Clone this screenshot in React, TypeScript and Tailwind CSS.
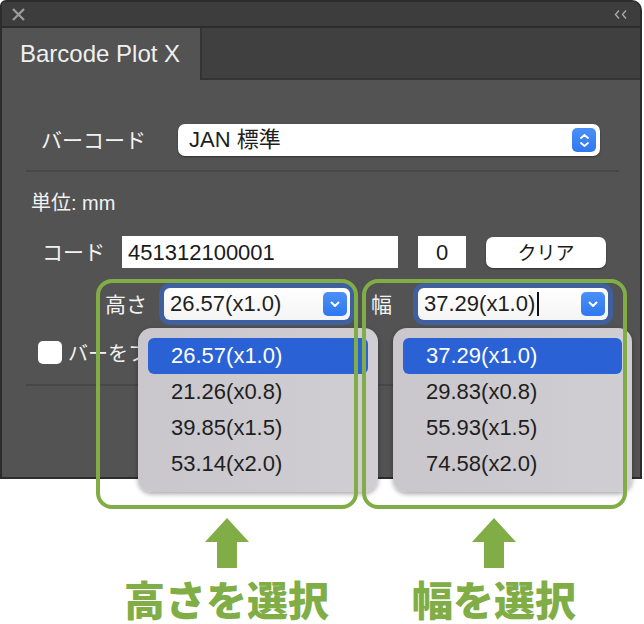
import React from "react";

const SANS = "font-['Liberation_Sans','Noto_Sans_CJK_JP',sans-serif]";
const CJK = "font-['Noto_Sans_CJK_JP',sans-serif]";

const heights = ["26.57(x1.0)", "21.26(x0.8)", "39.85(x1.5)", "53.14(x2.0)"];
const widths = ["37.29(x1.0)", "29.83(x0.8)", "55.93(x1.5)", "74.58(x2.0)"];

function ChevronButton() {
  return (
    <div className="flex h-[24px] w-[24px] items-center justify-center rounded-[5px] bg-gradient-to-b from-[#4a90f8] to-[#2f78ee]">
      <svg width="10" height="7" viewBox="0 0 10 7">
        <path d="M1.5 1.5 L5 5 L8.5 1.5" fill="none" stroke="white" strokeWidth="2" strokeLinecap="round" strokeLinejoin="round" />
      </svg>
    </div>
  );
}

function FocusedSelect({ value, width, caret }: { value: string; width: string; caret?: boolean }) {
  return (
    <div className={`${width} h-[42px] rounded-[11px] bg-[#3f5f9e] p-[5px]`}>
      <div className="flex h-full items-center justify-between rounded-[6px] bg-gradient-to-b from-white to-[#f4f4f4] pl-[6px] pr-[3px]">
        <span className="flex items-center text-[22px] leading-none text-[#1e1e1e]">
          {value}
          {caret && <span className="ml-[2px] inline-block h-[24px] w-[2px] bg-[#111]" />}
        </span>
        <ChevronButton />
      </div>
    </div>
  );
}

function Menu({ items, className }: { items: string[]; className: string }) {
  return (
    <div className={`absolute flex h-[164px] flex-col rounded-[14px] bg-gradient-to-r from-[#c9c7cc] to-[#d0ced3] p-[10px] shadow-[0_2px_5px_rgba(0,0,0,0.35)] ${className}`}>
      {items.map((item, i) => (
        <div
          key={item}
          className={`flex h-[36px] items-center rounded-[6px] pl-[23px] text-[22px] leading-none ${
            i === 0 ? "bg-[#2a62d6] text-white" : "text-[#1e1e1e]"
          }`}
        >
          {item}
        </div>
      ))}
    </div>
  );
}

function UpArrow() {
  return (
    <svg width="46" height="50" viewBox="0 0 46 50">
      <path d="M23 0 L45 24 L33 24 L33 50 L13 50 L13 24 L1 24 Z" fill="#80ad45" />
    </svg>
  );
}

export default function App() {
  return (
    <div className={`relative h-[624px] w-[644px] overflow-hidden bg-white ${SANS}`}>
      {/* panel */}
      <div className="flex h-[479px] w-[642px] flex-col overflow-hidden rounded-tl-[6px] rounded-tr-[10px] border-2 border-[#2c2c2c] bg-[#535353]">
        <div className="flex h-[24px] items-center justify-between bg-[#3d3d3d] pl-[10px] pr-[12px]">
          <svg width="13" height="13" viewBox="0 0 13 13">
            <path d="M1 1 L12 12 M12 1 L1 12" stroke="#9b9b9b" strokeWidth="2.3" />
          </svg>
          <svg width="14" height="9" viewBox="0 0 14 9">
            <path d="M5 0.5 L1.5 4.5 L5 8.5 M12 0.5 L8.5 4.5 L12 8.5" fill="none" stroke="#a8a8a8" strokeWidth="1.4" />
          </svg>
        </div>
        <div className="flex h-[54px] border-t-2 border-[#2c2c2c]">
          <div className="flex w-[198px] items-center bg-[#535353] pl-[18px] text-[24px] text-[#f0f0f0]">
            Barcode Plot X
          </div>
          <div className="flex-1 border-b-2 border-l-2 border-[#343434] bg-[#404040]" />
        </div>

        <div className="flex flex-col">
          <div className="mt-[44px] flex h-[32px] items-center">
            <span className={`ml-[39px] w-[137px] text-[21px] text-[#f2f2f2] ${CJK}`}>バーコード</span>
            <div className="flex h-[32px] w-[422px] items-center justify-between rounded-[7px] bg-white pl-[11px] pr-[4px] shadow-[0_1px_2px_rgba(0,0,0,0.4)]">
              <span className="text-[22px] leading-none text-[#1e1e1e]">JAN 標準</span>
              <div className="flex h-[24px] w-[24px] flex-col items-center justify-center gap-[3px] rounded-[5px] bg-gradient-to-b from-[#4a90f8] to-[#2f78ee]">
                <svg width="9" height="5" viewBox="0 0 9 5">
                  <path d="M1 4 L4.5 1 L8 4" fill="none" stroke="white" strokeWidth="1.8" strokeLinecap="round" />
                </svg>
                <svg width="9" height="5" viewBox="0 0 9 5">
                  <path d="M1 1 L4.5 4 L8 1" fill="none" stroke="white" strokeWidth="1.8" strokeLinecap="round" />
                </svg>
              </div>
            </div>
          </div>

          <div className="ml-[24px] mt-[14px] h-[2px] w-[593px] bg-[#474747]" />

          <div className="ml-[29px] mt-[19px] text-[20px] leading-[24px] text-[#f2f2f2]">単位: mm</div>

          <div className="mt-[21px] flex h-[32px] items-center">
            <span className={`ml-[40px] w-[80px] text-[21px] text-[#f2f2f2] ${CJK}`}>コード</span>
            <div className="flex h-[32px] w-[276px] items-center bg-white pl-[6px] text-[22px] text-[#1a1a1a]">
              451312100001
            </div>
            <div className="ml-[20px] flex h-[32px] w-[48px] items-center justify-center bg-white text-[22px] text-[#1a1a1a]">
              0
            </div>
            <div className={`ml-[20px] flex h-[31px] w-[120px] items-center justify-center rounded-[7px] bg-white text-[19px] text-[#1a1a1a] shadow-[0_1px_2px_rgba(0,0,0,0.4)] ${CJK}`}>
              クリア
            </div>
          </div>

          <div className="mt-[15px] flex h-[42px] items-center">
            <span className={`ml-[103px] w-[54px] text-[21px] text-[#f2f2f2] ${CJK}`}>高さ</span>
            <FocusedSelect value={heights[0]} width="w-[196px]" />
            <span className={`ml-[16px] w-[42px] text-[21px] text-[#f2f2f2] ${CJK}`}>幅</span>
            <FocusedSelect value={widths[0]} width="w-[200px]" caret />
          </div>

          <div className="mt-[16px] flex h-[23px] items-center">
            <div className="ml-[36px] h-[23px] w-[24px] rounded-[5px] bg-white" />
            <span className={`ml-[6px] text-[20px] text-[#f2f2f2] ${CJK}`}>バーをフチに</span>
          </div>

          <div className="ml-[24px] mt-[20px] h-[2px] w-[594px] bg-[#474747]" />
        </div>
      </div>

      {/* open menus */}
      <Menu items={heights} className="left-[138px] top-[328px] w-[240px]" />
      <Menu items={widths} className="left-[393px] top-[328px] w-[239px]" />

      {/* annotation frames */}
      <div className="absolute left-[96px] top-[279px] h-[230px] w-[262px] rounded-[16px] border-4 border-[#80ad45]" />
      <div className="absolute left-[362px] top-[279px] h-[230px] w-[265px] rounded-[16px] border-4 border-[#80ad45]" />

      {/* annotation captions */}
      <div className="ml-[96px] mt-[39px] flex gap-[4px]">
        <div className="flex w-[261px] flex-col items-center">
          <UpArrow />
          <span className={`mt-[8px] text-[41px] font-black leading-[44px] text-[#80ad45] ${CJK}`}>高さを選択</span>
        </div>
        <div className="flex w-[266px] flex-col items-center">
          <UpArrow />
          <span className={`mt-[8px] text-[41px] font-black leading-[44px] text-[#80ad45] ${CJK}`}>幅を選択</span>
        </div>
      </div>
    </div>
  );
}
